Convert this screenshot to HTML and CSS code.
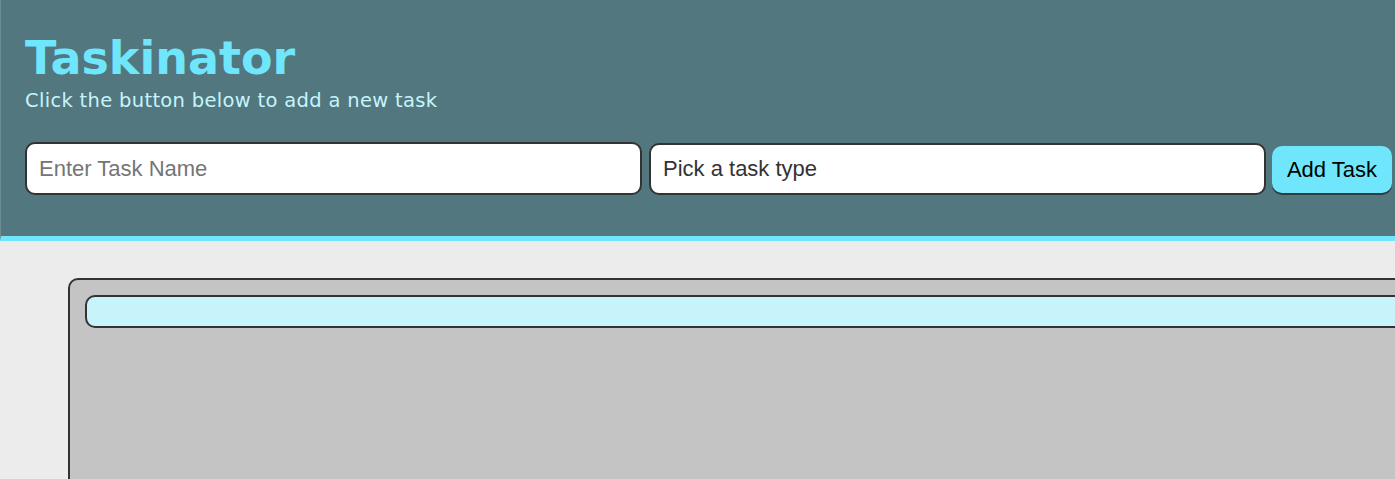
FILE: index.html
```html
<!DOCTYPE html>
<html>
<head>
<meta charset="utf-8">
<link rel="stylesheet" href="styles.css">
</head>
<body>
<header class="header">
  <h1 class="title">Taskinator</h1>
  <p class="subtitle">Click the button below to add a new task</p>
  <form class="task-form">
    <input class="field" type="text" placeholder="Enter Task Name">
    <div class="field select">Pick a task type</div>
    <button class="btn" type="button">Add Task</button>
  </form>
</header>
<main class="page">
  <section class="column">
    <div class="column-head"></div>
  </section>
</main>
</body>
</html>
```
FILE: styles.css
```css
html, body {
  margin: 0;
  padding: 0;
  overflow: hidden;
}
body {
  background: #ececec;
  font-family: Verdana, "DejaVu Sans", sans-serif;
  width: 1395px;
  height: 479px;
}
.header {
  background: #52777f;
  border-bottom: 5px solid #6fe6fc;
  border-left: 1px solid #6b8a91;
  padding: 31px 0 0 24px;
  height: 205px;
  box-sizing: content-box;
}
.title {
  margin: 0;
  color: #6fe6fc;
  font-size: 46px;
  line-height: 54px;
  font-weight: bold;
}
.subtitle {
  margin: 2px 0 0;
  color: #c6f4fb;
  font-size: 19.5px;
  line-height: 28px;
  letter-spacing: 0.32px;
}
.task-form {
  display: flex;
  align-items: flex-end;
  margin-top: 27px;
  width: 1500px;
}
.field {
  box-sizing: border-box;
  width: 617px;
  height: 53px;
  border: 2px solid #333;
  border-radius: 10px;
  background: #fff;
  font-family: "Liberation Sans", Arial, sans-serif;
  font-size: 22px;
  padding: 0 12px;
  margin-right: 7px;
  outline: none;
}
.field::placeholder {
  color: #757575;
}
.select {
  display: flex;
  align-items: center;
  color: #333;
  height: 52px;
  margin-right: 6px;
}
.btn {
  width: 120px;
  height: 47px;
  border: none;
  border-radius: 10px;
  background: #6fe6fc;
  box-shadow: 0 2px 0 #2f3b3e;
  color: #000;
  font-family: "Liberation Sans", Arial, sans-serif;
  font-size: 22px;
  padding: 0;
  margin-bottom: 2px;
}
.page {
  padding: 37px 0 0 68px;
}
.column {
  box-sizing: border-box;
  width: 1400px;
  height: 260px;
  background: #c4c4c4;
  border: 2px solid #333;
  border-radius: 10px;
  padding: 15px;
}
.column-head {
  height: 29px;
  background: #c7f3fa;
  border: 2px solid #333;
  border-radius: 10px;
}
```
